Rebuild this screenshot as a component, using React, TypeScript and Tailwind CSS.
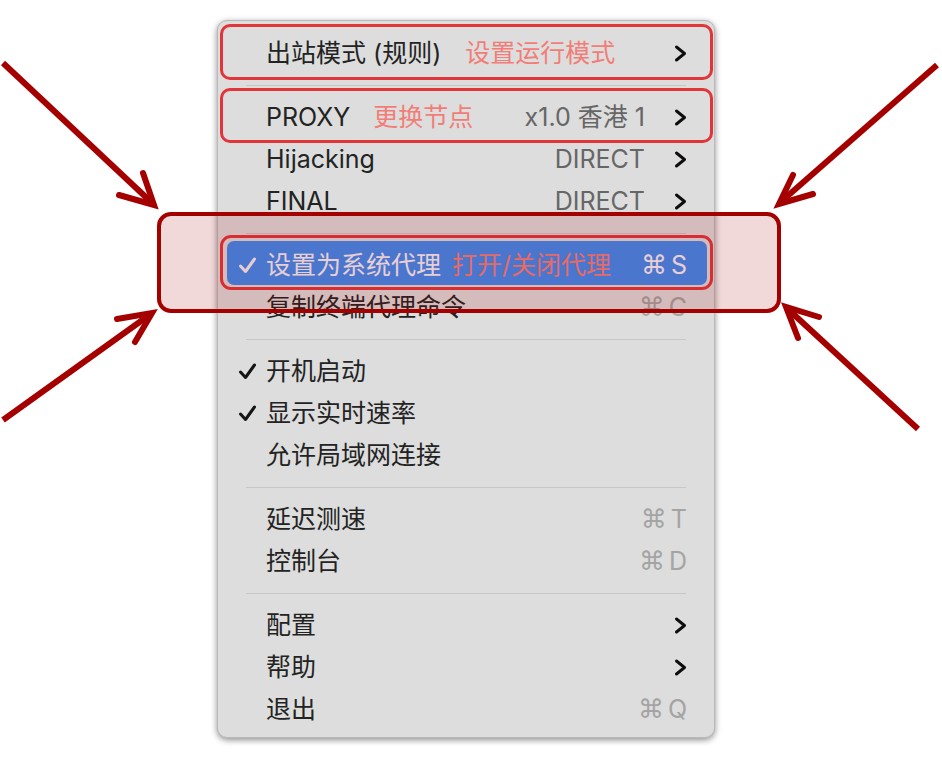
import React from "react";

type Row =
  | { sep: true }
  | {
      sep?: false;
      label: string;
      check?: boolean;
      note?: string;
      noteGap?: string;
      value?: string;
      sub?: boolean;
      shortcut?: string;
      boxed?: string;
      active?: boolean;
    };

const rows: Row[] = [
  { label: "出站模式 (规则)", note: "设置运行模式", noteGap: "ml-[24px]", sub: true, boxed: "-top-[8px] -bottom-[6px]" },
  { sep: true },
  { label: "PROXY", note: "更换节点", noteGap: "ml-[23px]", value: "x1.0 香港 1", sub: true, boxed: "-top-[8px] -bottom-[5px]" },
  { label: "Hijacking", value: "DIRECT", sub: true },
  { label: "FINAL", value: "DIRECT", sub: true },
  { sep: true },
  { label: "设置为系统代理", check: true, note: "打开/关闭代理", noteGap: "ml-[11px]", shortcut: "S", active: true },
  { label: "复制终端代理命令", shortcut: "C" },
  { sep: true },
  { label: "开机启动", check: true },
  { label: "显示实时速率", check: true },
  { label: "允许局域网连接" },
  { sep: true },
  { label: "延迟测速", shortcut: "T" },
  { label: "控制台", shortcut: "D" },
  { sep: true },
  { label: "配置", sub: true },
  { label: "帮助", sub: true },
  { label: "退出", shortcut: "Q" },
];

function Check({ light }: { light?: boolean }) {
  return (
    <svg width="19" height="19" viewBox="0 0 19 19" className="block">
      <path
        d="M2.5 10 L7.5 15.5 L16.5 3"
        fill="none"
        stroke={light ? "#f4f0f6" : "#151515"}
        strokeWidth="3"
        strokeLinecap="round"
        strokeLinejoin="round"
      />
    </svg>
  );
}

function Chevron() {
  return (
    <svg width="13" height="17" viewBox="0 0 13 17" className="block">
      <path d="M2.5 2 L10.5 8.5 L2.5 15" fill="none" stroke="#0e0e0e" strokeWidth="2.9" strokeLinecap="round" strokeLinejoin="round" />
    </svg>
  );
}

function Arrows() {
  const c = "#a50000";
  const arrows = [
    { line: "3,63 150,201", head: "119,195 154,205 143,173" },
    { line: "3,420 148,316", head: "117,319 152,313 135,342" },
    { line: "937,65 783,200", head: "813,194 779,204 793,175" },
    { line: "918,429 790,311", head: "819,317 786,307 798,338" },
  ];
  return (
    <svg width="942" height="760" className="absolute left-0 top-0 pointer-events-none">
      {arrows.map((a) => (
        <g key={a.line}>
          <polyline points={a.line} fill="none" stroke={c} strokeWidth="6" strokeLinecap="butt" />
          <polyline points={a.head} fill="none" stroke={c} strokeWidth="6" strokeLinecap="round" strokeLinejoin="miter" />
        </g>
      ))}
    </svg>
  );
}

export default function App() {
  return (
    <div className="relative w-[942px] h-[760px] bg-white overflow-hidden font-['Inter','Noto_Sans_CJK_SC',sans-serif]">
      <div className="pl-[217px] pt-[20px]">
        <div className="w-[498px] h-[718px] rounded-[10px] bg-[#dcdddc] border border-[#b9b9b9] shadow-[0_2px_6px_rgba(0,0,0,0.45)] pt-[11px]">
          {rows.map((r, i) =>
            r.sep ? (
              <div key={i} className="h-[22px] flex items-center px-[28px]">
                <div className="h-px w-full bg-[#c6c7c6]" />
              </div>
            ) : (
              <div
                key={i}
                className={`relative h-[42px] flex items-center pl-[20px] pr-[27px] text-[25px] leading-none ${
                  r.active ? "text-[#f6f3f8]" : "text-[#232323]"
                }`}
              >
                {r.active && <div className="absolute left-[9px] right-[7px] -top-[3px] bottom-[1px] rounded-[7px] bg-[#3d8bf2]" />}
                {r.boxed && (
                  <div className={`absolute left-[2px] right-[1px] ${r.boxed} rounded-[10px] border-[3px] border-[#e2353a]`} />
                )}
                {r.active && (
                  <div className="absolute left-[2px] right-[1px] -top-[9px] -bottom-[4px] rounded-[11px] border-[3px] border-[#e2353a]" />
                )}
                <div className="relative w-[28px] flex items-center">{r.check && <Check light={r.active} />}</div>
                <span className="relative">{r.label}</span>
                {r.note && <span className={`relative ${r.noteGap} text-[#f27d78]`}>{r.note}</span>}
                <div className="relative ml-auto flex items-center">
                  {r.value && <span className="text-[#666666]">{r.value}</span>}
                  {r.sub && (
                    <div className="w-[42px] flex justify-end">
                      <Chevron />
                    </div>
                  )}
                  {r.shortcut && (
                    <span className={`flex items-center gap-[4px] ${r.active ? "text-[#f6f3f8]" : "text-[#a4a4a4]"}`}>
                      <span className="font-['DejaVu_Sans',sans-serif] text-[26px]">⌘</span>
                      <span>{r.shortcut}</span>
                    </span>
                  )}
                </div>
              </div>
            )
          )}
        </div>
      </div>

      {/* callout box over the system proxy row */}
      <div className="absolute left-[157px] top-[212px] w-[624px] h-[101px] rounded-[14px] border-[4px] border-[#a50000] bg-[rgba(160,0,0,0.15)]" />
      <Arrows />
    </div>
  );
}
